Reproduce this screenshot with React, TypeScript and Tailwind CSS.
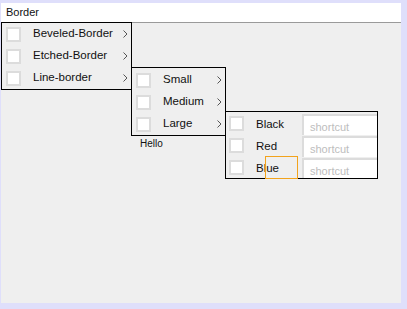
import React from 'react';

const font = { fontFamily: '"Liberation Sans", Arial, sans-serif' };

function Check() {
  return <div className="w-[15px] h-[15px] shrink-0 border-2 border-[#dcdcdc] bg-white" />;
}

function Chevron() {
  return (
    <svg width="5" height="8" viewBox="0 0 5 8" className="shrink-0">
      <path d="M0.5 0.5 L4 4 L0.5 7.5" fill="none" stroke="#555" strokeWidth="1" />
    </svg>
  );
}

function Row({ label, arrow = true, pad }: { label: string; arrow?: boolean; pad: string }) {
  return (
    <div className={`flex items-center h-[22px] pl-[4px] ${pad}`}>
      <Check />
      <span className="ml-[12px] flex-1 text-[11.5px] text-[#111] leading-none">{label}</span>
      {arrow && <Chevron />}
    </div>
  );
}

function ColorRow({ label }: { label: string }) {
  return (
    <div className="flex h-[22px] pl-[3px]">
      <div className="flex items-center">
        <Check />
      </div>
      <div className="flex items-center w-[58px] pl-[12px] pt-[3px]">
        <span className="text-[11.5px] text-[#111] leading-none">{label}</span>
      </div>
      <div className="flex-1 mt-[2px] h-[21px] border-t-2 border-l-2 border-[#dcdcdc] bg-white flex items-end pl-[6px] pb-[2px] overflow-hidden">
        <span className="text-[11px] text-[#bdbdbd] leading-none">shortcut</span>
      </div>
    </div>
  );
}

export default function App() {
  return (
    <div className="w-[407px] h-[309px] bg-[#dfdffb] pt-[3px] pl-[1px]" style={font}>
      <div className="relative w-[400px] h-[300px] bg-[#efefef]">
        {/* menu bar */}
        <div className="h-[19px] bg-white border-b border-[#9a9a9a] box-content flex items-center pl-[5px]">
          <span className="text-[11px] text-[#111] leading-none">Border</span>
        </div>

        {/* level 1 */}
        <div className="absolute left-0 top-[19px] w-[131px] border border-black bg-[#efefef]">
          <Row label="Beveled-Border" pad="pr-[3px]" />
          <Row label="Etched-Border" pad="pr-[3px]" />
          <Row label="Line-border" pad="pr-[3px]" />
        </div>

        <span className="absolute left-[139px] top-[133px] text-[10px] text-[#111]">Hello</span>

        {/* level 2 */}
        <div className="absolute left-[130px] top-[64px] w-[95px] border border-black bg-[#efefef] pt-[1px]">
          <Row label="Small" pad="pr-[3px]" />
          <Row label="Medium" pad="pr-[3px]" />
          <Row label="Large" pad="pr-[3px]" />
        </div>

        {/* level 3 */}
        <div className="absolute left-[224px] top-[108px] w-[153px] border border-black bg-[#efefef] overflow-hidden">
          <ColorRow label="Black" />
          <ColorRow label="Red" />
          <ColorRow label="Blue" />
        </div>

        {/* focus outline */}
        <div className="absolute left-[264px] top-[153px] w-[33px] h-[23px] border border-[#f2a31c]" />
      </div>
    </div>
  );
}
